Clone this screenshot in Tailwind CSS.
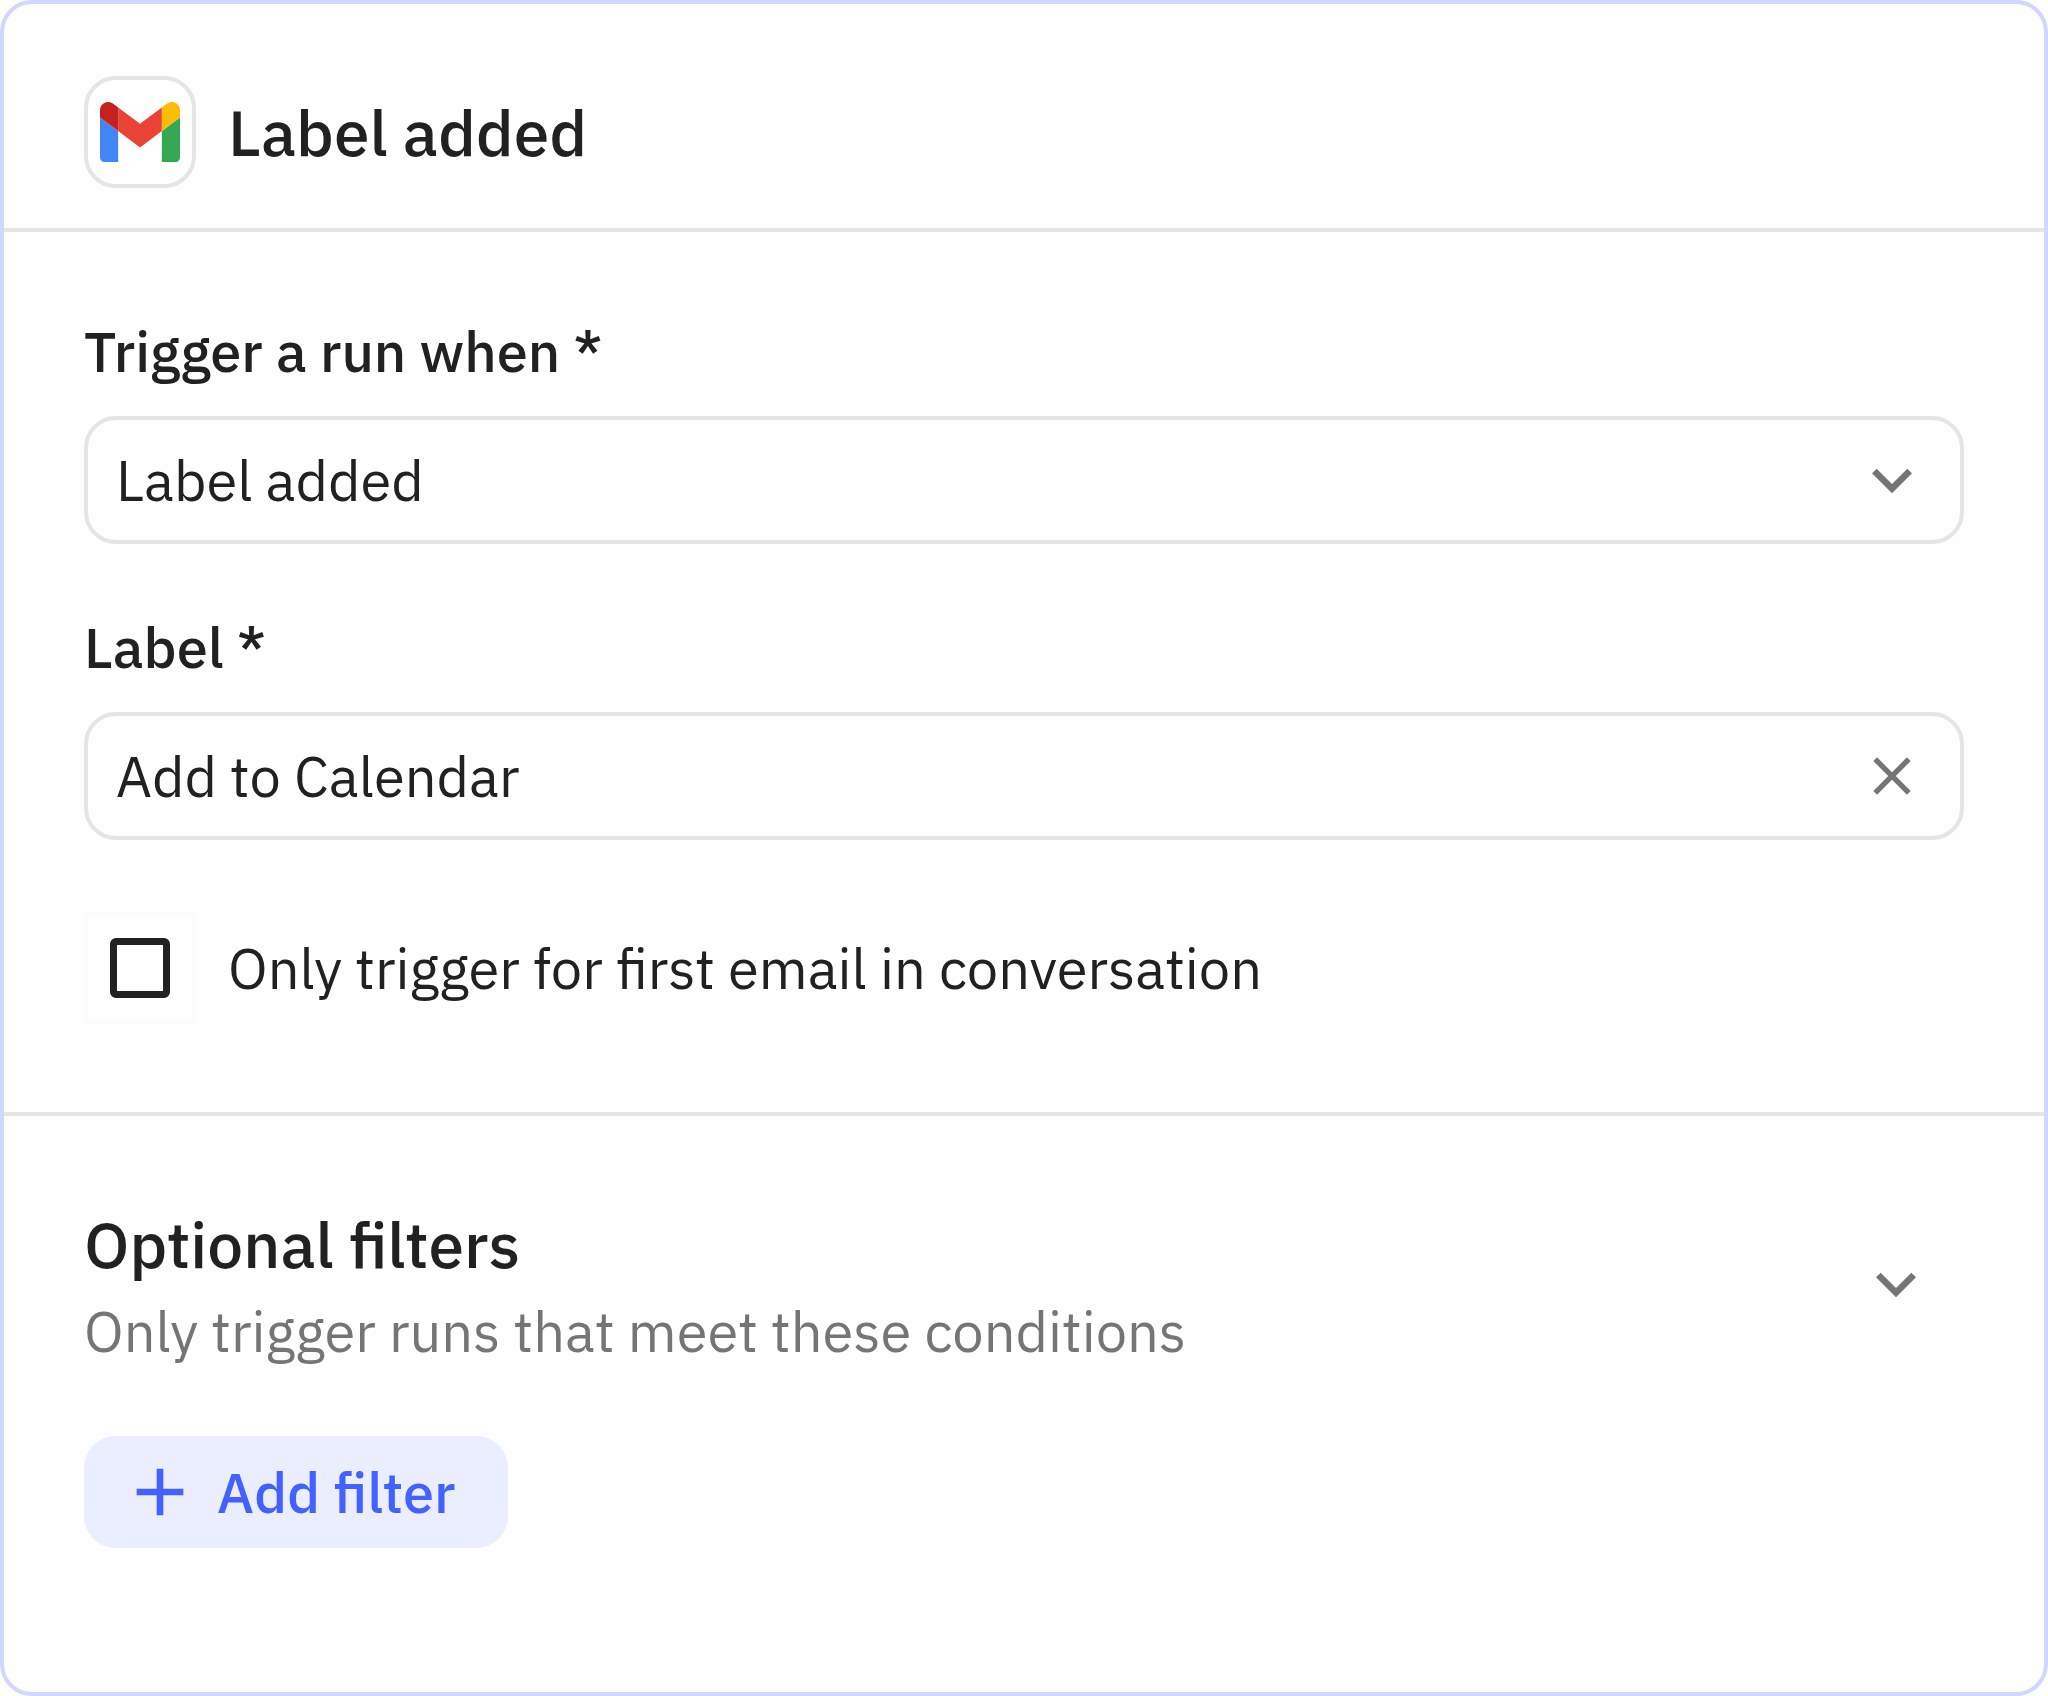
<!DOCTYPE html>
<html lang="en">
<head>
<meta charset="utf-8">
<meta name="viewport" content="width=device-width, initial-scale=1">
<title>Label added</title>
<script src="https://cdn.jsdelivr.net/npm/@tailwindcss/browser@4"></script>
</head>
<body class="bg-white">
<main class="min-h-screen rounded-[32px] border-4 border-[#d1d8ff] bg-[#fefefe] font-['IBM_Plex_Sans',Roboto,sans-serif] text-[56px] leading-[78px] text-[#212121]">
  <header class="flex items-center gap-8 border-b-4 border-[#e5e5e5] px-20 pt-[72px] pb-10">
    <span class="flex size-28 shrink-0 items-center justify-center rounded-[32px] border-4 border-[#e5e5e5] bg-white">
      <svg class="h-[60px] w-20" viewBox="52 42 88 66" aria-hidden="true">
        <path fill="#4285f4" d="M57 108h15V74L52 59v44c0 2.8 2.2 5 5 5"/>
        <path fill="#34a853" d="M120 108h15c2.8 0 5-2.2 5-5V59l-20 15"/>
        <path fill="#fbbc04" d="M120 48v26l20-15v-8c0-7.42-8.47-11.65-14.4-7.2"/>
        <path fill="#ea4335" d="M72 74V48l24 18 24-18v26L96 92"/>
        <path fill="#c5221f" d="M52 51v8l20 15V48l-5.6-4.2c-5.94-4.45-14.4-.22-14.4 7.2"/>
      </svg>
    </span>
    <h1 class="text-[64px] leading-[80px] font-medium">Label added</h1>
  </header>

  <section class="flex flex-col gap-[72px] border-b-4 border-[#e5e5e5] px-20 py-[88px]">
    <div class="flex flex-col gap-[34px]">
      <label for="trigger" class="leading-[62px] font-medium">Trigger a run when *</label>
      <div class="relative">
        <select id="trigger" class="block h-32 w-full appearance-none rounded-[32px] border-4 border-[#e5e5e5] bg-transparent pr-32 pl-7">
          <option>Label added</option>
        </select>
        <svg class="pointer-events-none absolute top-6 right-8 size-20" viewBox="0 0 24 24" fill="#757575" aria-hidden="true"><path d="M16.59 8.59L12 13.17 7.41 8.59 6 10l6 6 6-6z"/></svg>
      </div>
    </div>

    <div class="flex flex-col gap-[34px]">
      <label for="label" class="leading-[62px] font-medium">Label *</label>
      <div class="flex h-32 items-center rounded-[32px] border-4 border-[#e5e5e5] pr-9 pl-7">
        <input id="label" type="text" value="Add to Calendar" class="min-w-0 flex-1 bg-transparent outline-none">
        <button type="button" aria-label="Clear label" class="size-16 shrink-0">
          <svg class="size-16" viewBox="0 0 24 24" fill="#757575" aria-hidden="true"><path d="M19 6.41L17.59 5 12 10.59 6.41 5 5 6.41 10.59 12 5 17.59 6.41 19 12 13.41 17.59 19 19 17.59 13.41 12z"/></svg>
        </button>
      </div>
    </div>

    <div class="flex items-center gap-8">
      <span class="flex size-28 shrink-0 items-center justify-center rounded-lg border-4 border-[#fcfcfc]">
        <input id="first-only" type="checkbox" class="size-[60px] appearance-none rounded-md border-[7px] border-[#212121] bg-white checked:bg-[#212121]">
      </span>
      <label for="first-only">Only trigger for first email in conversation</label>
    </div>
  </section>

  <section class="px-20 pt-[88px] pb-36">
    <div class="flex items-start justify-between pr-7">
      <div class="flex flex-col gap-2">
        <h2 class="text-[64px] leading-[80px] font-medium">Optional filters</h2>
        <p class="text-[#757575]">Only trigger runs that meet these conditions</p>
      </div>
      <button type="button" aria-label="Toggle optional filters" class="mt-10 size-20 shrink-0">
        <svg class="size-20" viewBox="0 0 24 24" fill="#757575" aria-hidden="true"><path d="M16.59 8.59L12 13.17 7.41 8.59 6 10l6 6 6-6z"/></svg>
      </button>
    </div>
    <button type="button" class="mt-[66px] flex h-28 items-center gap-[17px] rounded-[32px] bg-[#ebeeff] pr-[52px] pl-9 font-medium text-[#4361ff]">
      <svg class="size-20" viewBox="0 0 24 24" fill="currentColor" aria-hidden="true"><path d="M19 13h-6v6h-2v-6H5v-2h6V5h2v6h6z"/></svg>
      Add filter
    </button>
  </section>
</main>
</body>
</html>
